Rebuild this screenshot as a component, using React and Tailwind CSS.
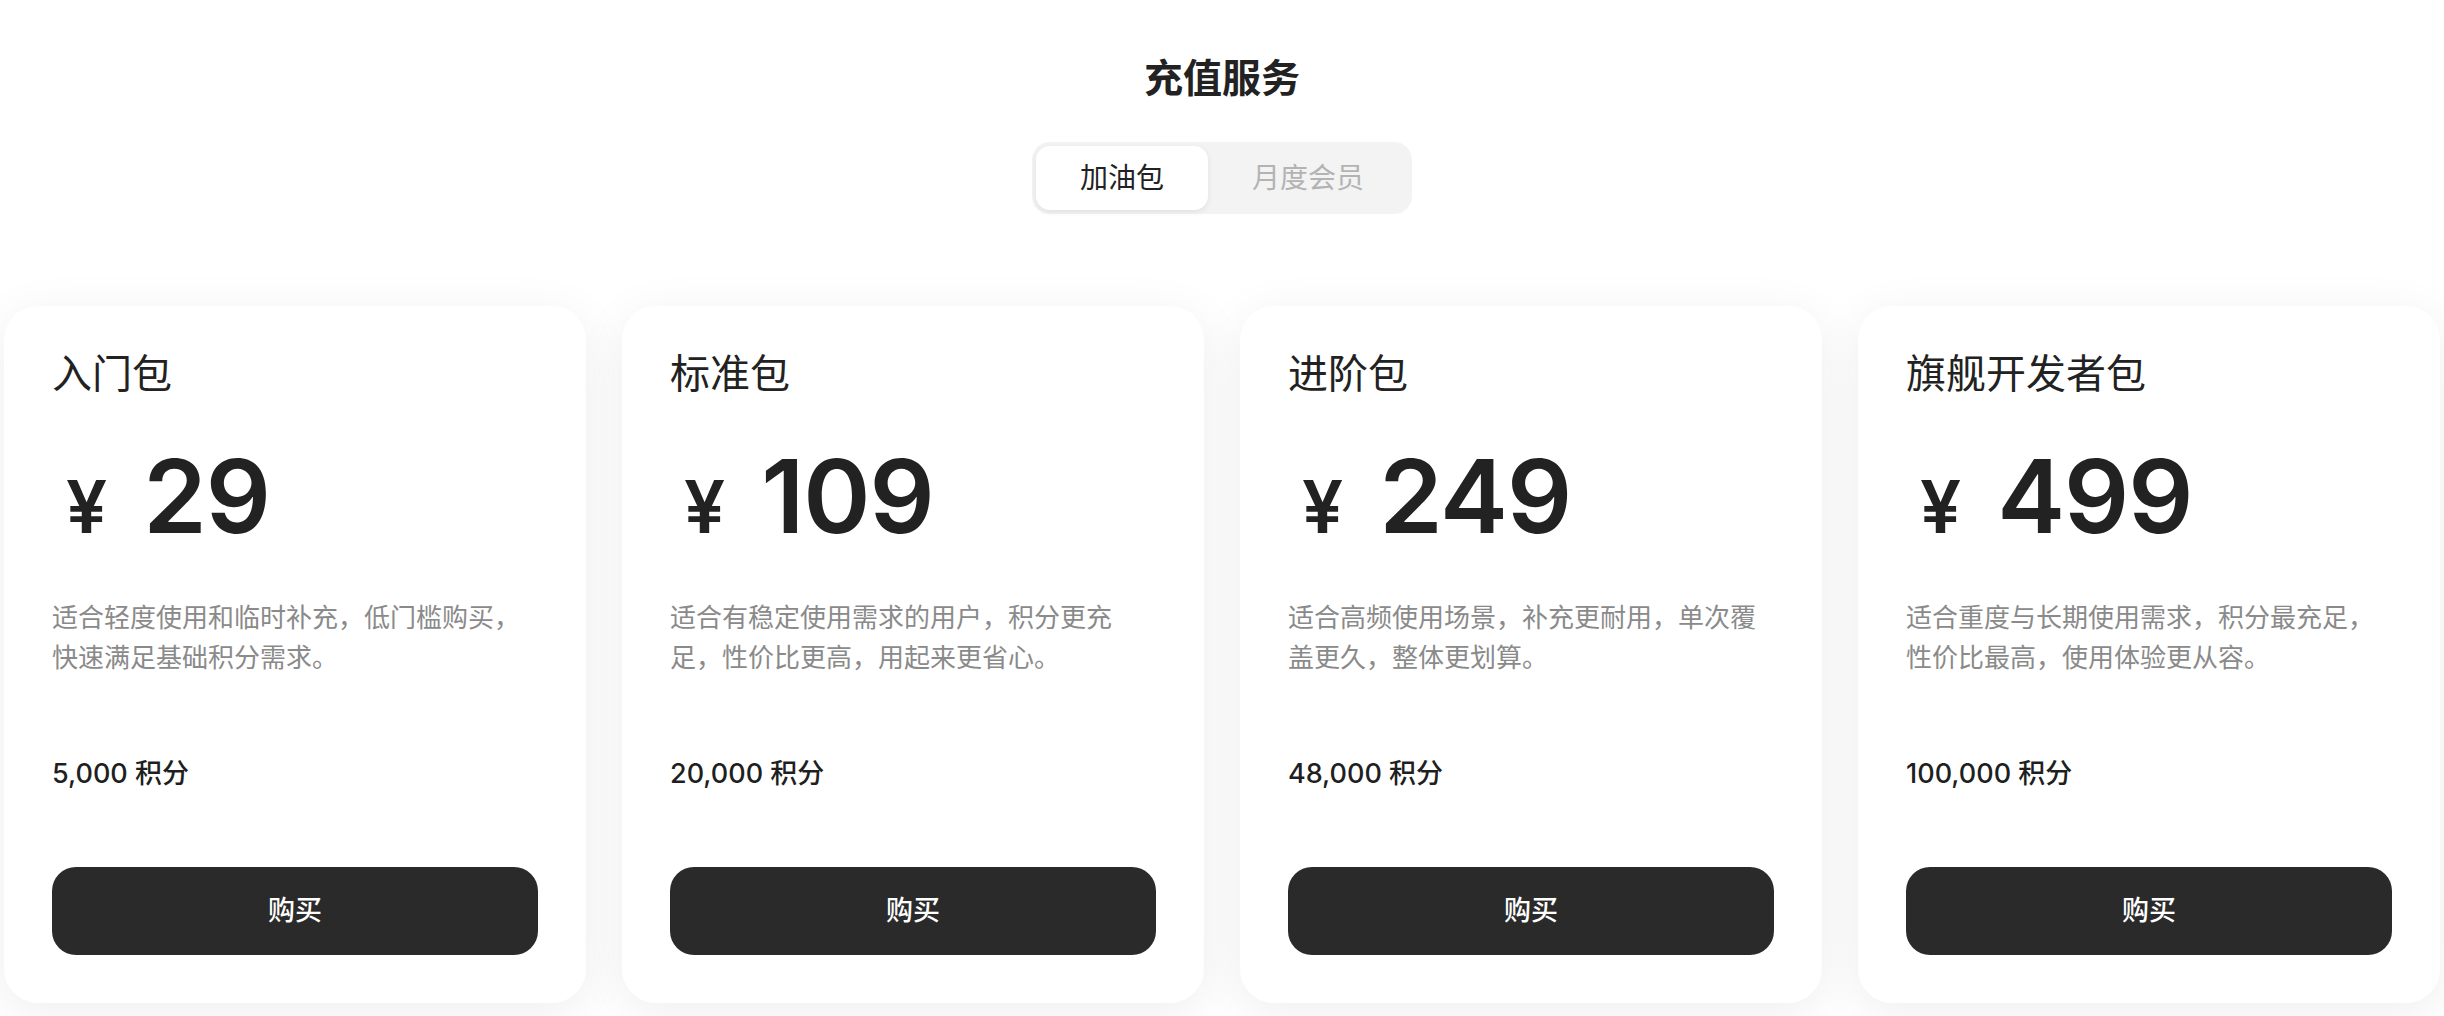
import { useState } from "react";

const packs = [
  {
    name: "入门包",
    price: "29",
    desc: "适合轻度使用和临时补充，低门槛购买，快速满足基础积分需求。",
    points: "5,000 积分",
  },
  {
    name: "标准包",
    price: "109",
    desc: "适合有稳定使用需求的用户，积分更充足，性价比更高，用起来更省心。",
    points: "20,000 积分",
  },
  {
    name: "进阶包",
    price: "249",
    desc: "适合高频使用场景，补充更耐用，单次覆盖更久，整体更划算。",
    points: "48,000 积分",
  },
  {
    name: "旗舰开发者包",
    price: "499",
    desc: "适合重度与长期使用需求，积分最充足，性价比最高，使用体验更从容。",
    points: "100,000 积分",
  },
];

function PackCard({ pack }) {
  return (
    <section className="flex flex-col bg-white rounded-[34px] p-[48px] shadow-[0_10px_50px_rgba(0,0,0,0.07)]">
      <h3 className="text-[40px] leading-[40px] font-normal text-[#222]">{pack.name}</h3>

      {/* Price */}
      <div className="mt-[51px] flex items-baseline h-[102px]">
        <span className="ml-[14px] mr-[36px] text-[73px] leading-none font-semibold text-[#222]">¥</span>
        <strong className="text-[102px] leading-none font-semibold text-[#222] tracking-[-1px]">{pack.price}</strong>
      </div>

      <p className="mt-[51px] h-[80px] text-[26px] leading-[40px] text-[#8a8a8a]">{pack.desc}</p>

      <div className="mt-[76px] text-[27px] leading-[40px] font-medium text-[#1f1f1f]">{pack.points}</div>

      <button
        type="button"
        className="mt-[73px] h-[88px] w-full rounded-[24px] bg-[#2a2a2a] text-white text-[27px] font-medium"
      >
        购买
      </button>
    </section>
  );
}

export default function App() {
  const [tab, setTab] = useState("fuel");

  const tabClass = (key) =>
    tab === key
      ? "h-[64px] px-[44px] rounded-[14px] bg-white text-[28px] text-[#222] shadow-[0_2px_6px_rgba(0,0,0,0.08)]"
      : "h-[64px] px-[44px] rounded-[14px] text-[28px] text-[#b3b3b3]";

  return (
    <div
      className="min-h-screen bg-white pt-[58px]"
      style={{ fontFamily: "Inter, 'Noto Sans CJK SC', sans-serif" }}
    >
      <h1 className="text-center text-[39px] leading-[40px] font-bold text-[#222]">充值服务</h1>

      {/* Tabs */}
      <div className="mt-[44px] flex justify-center">
        <div className="flex p-[4px] rounded-[18px] bg-[#f3f3f3]">
          <button type="button" onClick={() => setTab("fuel")} className={tabClass("fuel")}>
            加油包
          </button>
          <button type="button" onClick={() => setTab("monthly")} className={tabClass("monthly")}>
            月度会员
          </button>
        </div>
      </div>

      {/* Cards */}
      <div className="mt-[92px] grid grid-cols-4 gap-[36px] px-[4px]">
        {packs.map((p) => (
          <PackCard key={p.name} pack={p} />
        ))}
      </div>
    </div>
  );
}
